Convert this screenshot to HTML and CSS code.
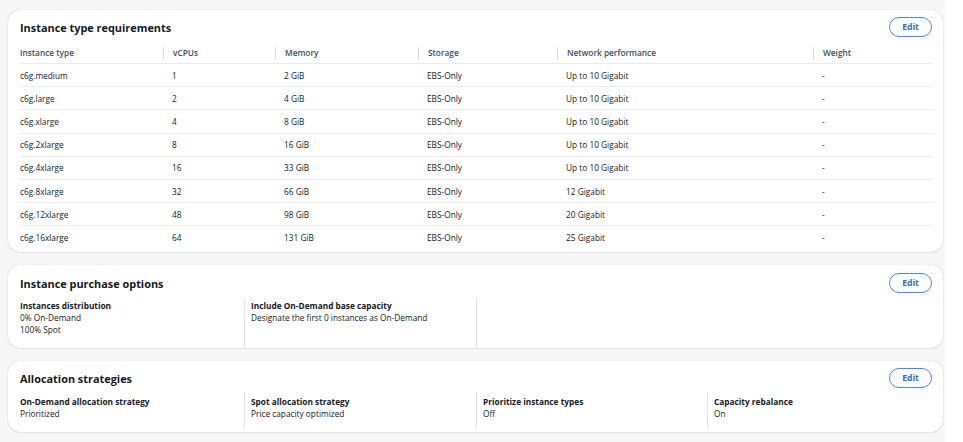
FILE: index.html
```html
<!DOCTYPE html>
<html lang="en">
<head>
<meta charset="utf-8">
<title>Instance settings</title>
<link rel="stylesheet" href="styles.css">
</head>
<body>
<div class="page">
  <section class="card card-types">
    <header class="card-head">
      <h2>Instance type requirements</h2>
      <button class="edit">Edit</button>
    </header>
    <div class="tbl">
      <div class="row head">
        <div class="c">Instance type</div><div class="c">vCPUs</div><div class="c">Memory</div><div class="c">Storage</div><div class="c">Network performance</div><div class="c">Weight</div>
      </div>
      <div class="row"><div class="c">c6g.medium</div><div class="c">1</div><div class="c">2 GiB</div><div class="c">EBS-Only</div><div class="c">Up to 10 Gigabit</div><div class="c">-</div></div>
      <div class="row"><div class="c">c6g.large</div><div class="c">2</div><div class="c">4 GiB</div><div class="c">EBS-Only</div><div class="c">Up to 10 Gigabit</div><div class="c">-</div></div>
      <div class="row"><div class="c">c6g.xlarge</div><div class="c">4</div><div class="c">8 GiB</div><div class="c">EBS-Only</div><div class="c">Up to 10 Gigabit</div><div class="c">-</div></div>
      <div class="row"><div class="c">c6g.2xlarge</div><div class="c">8</div><div class="c">16 GiB</div><div class="c">EBS-Only</div><div class="c">Up to 10 Gigabit</div><div class="c">-</div></div>
      <div class="row"><div class="c">c6g.4xlarge</div><div class="c">16</div><div class="c">33 GiB</div><div class="c">EBS-Only</div><div class="c">Up to 10 Gigabit</div><div class="c">-</div></div>
      <div class="row"><div class="c">c6g.8xlarge</div><div class="c">32</div><div class="c">66 GiB</div><div class="c">EBS-Only</div><div class="c">12 Gigabit</div><div class="c">-</div></div>
      <div class="row"><div class="c">c6g.12xlarge</div><div class="c">48</div><div class="c">98 GiB</div><div class="c">EBS-Only</div><div class="c">20 Gigabit</div><div class="c">-</div></div>
      <div class="row"><div class="c">c6g.16xlarge</div><div class="c">64</div><div class="c">131 GiB</div><div class="c">EBS-Only</div><div class="c">25 Gigabit</div><div class="c">-</div></div>
    </div>
  </section>

  <section class="card card-purchase">
    <header class="card-head">
      <h2>Instance purchase options</h2>
      <button class="edit">Edit</button>
    </header>
    <div class="kv kv-purchase">
      <div class="kv-col">
        <div class="k">Instances distribution</div>
        <div class="v">0% On-Demand</div>
        <div class="v">100% Spot</div>
      </div>
      <div class="kv-col">
        <div class="k">Include On-Demand base capacity</div>
        <div class="v">Designate the first 0 instances as On-Demand</div>
      </div>
      <div class="kv-col"></div>
    </div>
  </section>

  <section class="card card-alloc">
    <header class="card-head">
      <h2>Allocation strategies</h2>
      <button class="edit">Edit</button>
    </header>
    <div class="kv kv-alloc">
      <div class="kv-col">
        <div class="k">On-Demand allocation strategy</div>
        <div class="v">Prioritized</div>
      </div>
      <div class="kv-col">
        <div class="k">Spot allocation strategy</div>
        <div class="v">Price capacity optimized</div>
      </div>
      <div class="kv-col">
        <div class="k">Prioritize instance types</div>
        <div class="v">Off</div>
      </div>
      <div class="kv-col">
        <div class="k">Capacity rebalance</div>
        <div class="v">On</div>
      </div>
    </div>
  </section>
</div>
</body>
</html>
```

FILE: styles.css
```css
* { box-sizing: border-box; }
html, body { margin: 0; padding: 0; background: #ffffff; }
body {
  font-family: "Open Sans", "Noto Sans", "Liberation Sans", sans-serif;
  font-size: 8.3px;
  color: #16191f;
  height: 442px;
  overflow: hidden;
}
.page {
  width: 945px;
  min-height: 442px;
  background: #f7f7f7;
  padding: 10px 2px 10px 8px;
  display: flex;
  flex-direction: column;
  gap: 13px;
}
.card {
  background: #fff;
  border-radius: 12px;
  box-shadow: 0 0 1px rgba(0,0,0,0.28), 0 1px 2px rgba(0,0,0,0.06);
  padding: 7px 11px 0 12px;
}
.card-head {
  display: flex;
  align-items: center;
  justify-content: space-between;
  height: 20px;
}
.card-head h2 {
  margin: 0;
  font-size: 10.9px;
  font-weight: 700;
  color: #16191f;
}
.edit {
  width: 43px;
  height: 20px;
  border: 1.5px solid #4f86ea;
  border-radius: 10px;
  background: #fff;
  color: #2e6fd9;
  font-family: inherit;
  font-size: 8.6px;
  font-weight: 700;
  padding: 0;
}
.card-types { height: 242px; }
.tbl { margin-top: 5px; }
.row {
  display: grid;
  grid-template-columns: 143px 112px 143px 139px 256px 119px;
  height: 23.2px;
  align-items: center;
  border-top: 1px solid #eaeded;
}
.row.head { border-top: none; height: 21px; color: #414d5c; font-weight: 600; }
.row .c { padding-left: 9px; }
.row .c:first-child { padding-left: 0; }
.row.head .c + .c {
  border-left: 1px solid #d5dbdb;
  line-height: 12px;
}
.card-purchase { height: 83px; padding-top: 8px; }
.card-alloc { height: 71px; padding-top: 7px; }
.kv {
  display: grid;
  margin-top: 5px;
}
.kv-purchase { grid-template-columns: 224px 232px 1fr; height: 50px; }
.kv-alloc { grid-template-columns: 224px 232px 231px 1fr; height: 37px; margin-top: 4px; }
.kv-col { line-height: 12px; }
.kv-purchase .kv-col { padding-top: 2px; }
.kv-alloc .kv-col { padding-top: 4px; }
.kv-col + .kv-col { border-left: 1px solid #e3e6e8; padding-left: 6px; }
.k { font-weight: 700; color: #16191f; }
.v { color: #16191f; }
```
